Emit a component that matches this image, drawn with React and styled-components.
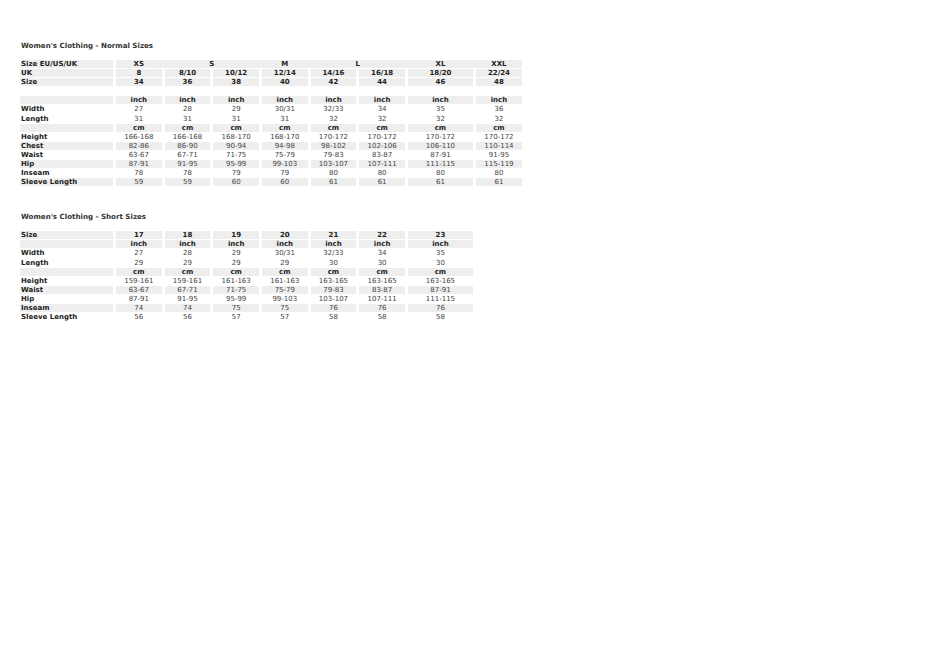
import React from 'react';
import styled, { createGlobalStyle } from 'styled-components';

const GlobalStyle = createGlobalStyle`
  html, body {
    margin: 0;
    padding: 0;
    background: #ffffff;
  }
  body {
    font-family: "DejaVu Sans", Verdana, sans-serif;
    color: #333333;
  }
`;

const Page = styled.div`
  width: 950px;
  min-height: 672px;
  padding: 42px 0 0 20px;
  box-sizing: border-box;
`;

const Section = styled.section`
  margin-bottom: 27px;
`;

const Title = styled.h2`
  margin: 0 0 10px 1px;
  font-size: 7.1px;
  line-height: 8px;
  font-weight: bold;
  color: #333333;
`;

const Grid = styled.div`
  display: grid;
  grid-template-columns: ${(p) => p.$columns};
  grid-auto-rows: 8px;
  column-gap: 3px;
  row-gap: 1.1px;
  width: max-content;
`;

const Cell = styled.div`
  background: ${(p) => (p.$shaded ? '#eeeeee' : 'transparent')};
  font-size: 7px;
  line-height: 8px;
  font-weight: ${(p) => (p.$bold ? 'bold' : 'normal')};
  color: ${(p) => (p.$bold ? '#222222' : '#444444')};
  text-align: ${(p) => (p.$label ? 'left' : 'center')};
  padding-left: ${(p) => (p.$label ? '1px' : '0')};
  white-space: nowrap;
  overflow: hidden;
  grid-column: ${(p) => (p.$span ? `span ${p.$span}` : 'auto')};
`;

const HeaderBand = styled.div`
  grid-column: 2 / -1;
  background: #eeeeee;
  display: grid;
  grid-template-columns: ${(p) => p.$columns};
  column-gap: 3px;
`;

const HeaderLabel = styled.div`
  grid-column: ${(p) => `span ${p.$span || 1}`};
  font-size: 7px;
  line-height: 8px;
  font-weight: bold;
  color: #222222;
  text-align: center;
`;

const W = '45.67px';
const normalCols = `93px ${W} ${W} ${W} ${W} ${W} ${W} 65px 46px`;
const normalDataCols = `${W} ${W} ${W} ${W} ${W} ${W} 65px 46px`;
const shortCols = `93px ${W} ${W} ${W} ${W} ${W} ${W} 65px`;

const inch = (n) => Array(n).fill('inch');
const cm = (n) => Array(n).fill('cm');

const normalRows = [
  { label: 'UK', values: ['8', '8/10', '10/12', '12/14', '14/16', '16/18', '18/20', '22/24'], shaded: true, bold: true },
  { label: 'Size', values: ['34', '36', '38', '40', '42', '44', '46', '48'], shaded: true, bold: true },
  { blank: true },
  { label: '', values: inch(8), shaded: true, bold: true },
  { label: 'Width', values: ['27', '28', '29', '30/31', '32/33', '34', '35', '36'] },
  { label: 'Length', values: ['31', '31', '31', '31', '32', '32', '32', '32'] },
  { label: '', values: cm(8), shaded: true, bold: true },
  { label: 'Height', values: ['166-168', '166-168', '168-170', '168-170', '170-172', '170-172', '170-172', '170-172'] },
  { label: 'Chest', values: ['82-86', '86-90', '90-94', '94-98', '98-102', '102-106', '106-110', '110-114'], shaded: true },
  { label: 'Waist', values: ['63-67', '67-71', '71-75', '75-79', '79-83', '83-87', '87-91', '91-95'] },
  { label: 'Hip', values: ['87-91', '91-95', '95-99', '99-103', '103-107', '107-111', '111-115', '115-119'], shaded: true },
  { label: 'Inseam', values: ['78', '78', '79', '79', '80', '80', '80', '80'] },
  { label: 'Sleeve Length', values: ['59', '59', '60', '60', '61', '61', '61', '61'], shaded: true },
];

const shortRows = [
  { label: 'Size', values: ['17', '18', '19', '20', '21', '22', '23'], shaded: true, bold: true },
  { label: '', values: inch(7), shaded: true, bold: true },
  { label: 'Width', values: ['27', '28', '29', '30/31', '32/33', '34', '35'] },
  { label: 'Length', values: ['29', '29', '29', '29', '30', '30', '30'] },
  { label: '', values: cm(7), shaded: true, bold: true },
  { label: 'Height', values: ['159-161', '159-161', '161-163', '161-163', '163-165', '163-165', '163-165'] },
  { label: 'Waist', values: ['63-67', '67-71', '71-75', '75-79', '79-83', '83-87', '87-91'], shaded: true },
  { label: 'Hip', values: ['87-91', '91-95', '95-99', '99-103', '103-107', '107-111', '111-115'] },
  { label: 'Inseam', values: ['74', '74', '75', '75', '76', '76', '76'], shaded: true },
  { label: 'Sleeve Length', values: ['56', '56', '57', '57', '58', '58', '58'] },
];

const sizeHeaders = [
  { name: 'XS' },
  { name: 'S', span: 2 },
  { name: 'M' },
  { name: 'L', span: 2 },
  { name: 'XL' },
  { name: 'XXL' },
];

function Rows({ rows, count }) {
  return rows.map((row, i) => {
    if (row.blank) {
      return <Cell key={i} $span={count + 1} />;
    }
    return (
      <React.Fragment key={i}>
        <Cell $label $bold $shaded={row.shaded}>{row.label}</Cell>
        {row.values.map((v, j) => (
          <Cell key={j} $bold={row.bold} $shaded={row.shaded}>{v}</Cell>
        ))}
      </React.Fragment>
    );
  });
}

export default function App() {
  return (
    <>
      <GlobalStyle />
      <Page>
        <Section>
          <Title>Women's Clothing - Normal Sizes</Title>
          <Grid $columns={normalCols}>
            <Cell $label $bold $shaded>Size EU/US/UK</Cell>
            <HeaderBand $columns={normalDataCols}>
              {sizeHeaders.map((h) => (
                <HeaderLabel key={h.name} $span={h.span}>{h.name}</HeaderLabel>
              ))}
            </HeaderBand>
            <Rows rows={normalRows} count={8} />
          </Grid>
        </Section>
        <Section>
          <Title>Women's Clothing - Short Sizes</Title>
          <Grid $columns={shortCols}>
            <Rows rows={shortRows} count={7} />
          </Grid>
        </Section>
      </Page>
    </>
  );
}
